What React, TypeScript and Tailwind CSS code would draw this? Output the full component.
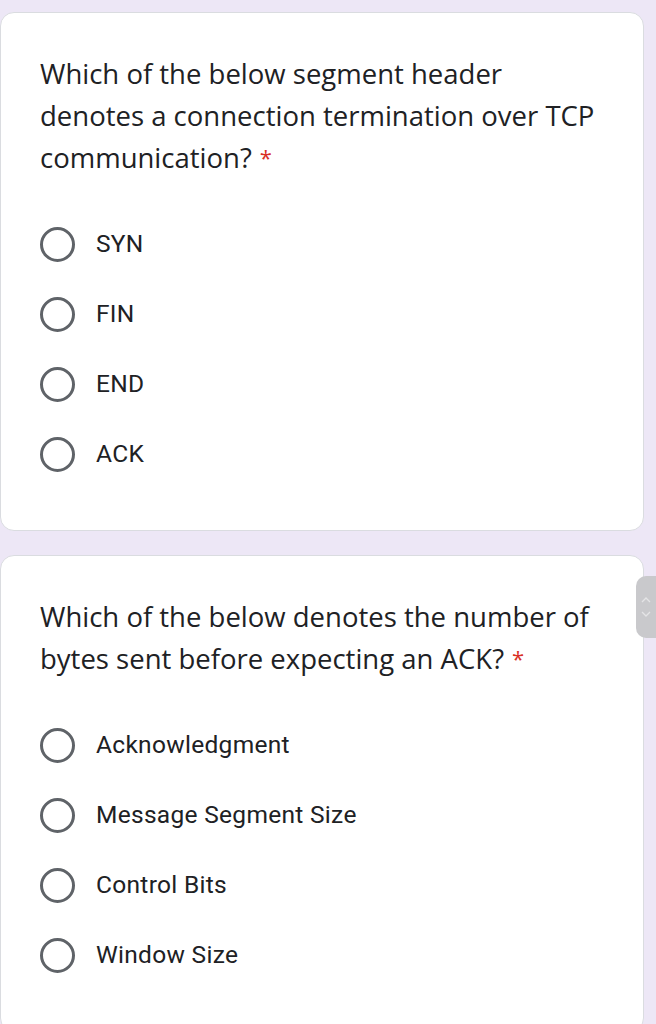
import React from 'react'

const QUESTIONS = [
  {
    id: 'q1',
    title: 'Which of the below segment header denotes a connection termination over TCP communication?',
    options: ['SYN', 'FIN', 'END', 'ACK'],
  },
  {
    id: 'q2',
    title: 'Which of the below denotes the number of bytes sent before expecting an ACK?',
    options: ['Acknowledgment', 'Message Segment Size', 'Control Bits', 'Window Size'],
  },
]

function Radio() {
  return <span className="block w-[35px] h-[35px] rounded-full border-[3.5px] border-[#5f6368] shrink-0" />
}

export default function App() {
  return (
    <main className="relative bg-[#ede7f6] min-h-screen h-[1024px] overflow-hidden pt-3 pr-[12px]" style={{ fontFamily: 'Roboto, sans-serif' }}>
      <div className="flex flex-col gap-[24px]">
        {QUESTIONS.map((q) => (
          <section key={q.id} className="bg-white rounded-[14px] border border-[#dadce0] pl-[39px] pr-8 pt-[40px] pb-[41px]">
            <h2 className="text-[27.5px] leading-[42px] text-[#202124] mb-[30px]" style={{ fontFamily: '"Open Sans", sans-serif' }}>
              {q.title}
              <span className="ml-2 text-[22px] leading-none align-[2px] text-[#d93025]">*</span>
            </h2>
            <div className="flex flex-col">
              {q.options.map((opt) => (
                <label key={opt} className="flex items-center h-[70px] gap-[21px]">
                  <Radio />
                  <span className="text-[24.5px] tracking-[0.3px] text-[#202124]">{opt}</span>
                </label>
              ))}
            </div>
          </section>
        ))}
      </div>

      {/* scroll thumb */}
      <div className="absolute right-0 top-[576px] w-[20px] h-[62px] rounded-l-[10px] bg-[#c9c9cc] flex flex-col items-center justify-center gap-2">
        <svg width="10" height="6" viewBox="0 0 10 6"><path d="M1 5l4-4 4 4" fill="none" stroke="#e4e4e6" strokeWidth="1.3" /></svg>
        <svg width="10" height="6" viewBox="0 0 10 6"><path d="M1 1l4 4 4-4" fill="none" stroke="#e4e4e6" strokeWidth="1.3" /></svg>
      </div>
    </main>
  )
}
